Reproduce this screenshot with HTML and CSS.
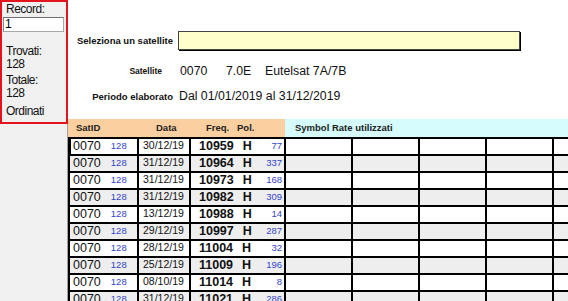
FILE: index.html
```html
<!DOCTYPE html>
<html lang="it">
<head>
<meta charset="utf-8">
<title>Satellite</title>
<link rel="stylesheet" href="styles.css">
</head>
<body>
<div class="app">
  <aside class="side">
    <div class="nav">
      <div class="lbl l-rec">Record:</div>
      <div class="recbox">1</div>
      <div class="lbl l-trov">Trovati:</div>
      <div class="lbl l-n1">128</div>
      <div class="lbl l-tot">Totale:</div>
      <div class="lbl l-n2">128</div>
      <div class="lbl l-ord">Ordinati</div>
    </div>
  </aside>
  <main class="main">
    <div class="form">
      <div class="frow r1">
        <span class="flabel">Seleziona un satellite</span>
        <div class="combo"></div>
      </div>
      <div class="frow r2">
        <span class="flabel small">Satellite</span>
        <span class="val v1">0070</span>
        <span class="val v2">7.0E</span>
        <span class="val">Eutelsat 7A/7B</span>
      </div>
      <div class="frow r3">
        <span class="flabel">Periodo elaborato</span>
        <span class="val v0">Dal 01/01/2019 al 31/12/2019</span>
      </div>
    </div>
    <div class="grid">
      <div class="thead">
        <div class="th-o">
          <span class="h-sat">SatID</span>
          <span class="h-data">Data</span>
          <span class="h-freq">Freq.</span>
          <span class="h-pol">Pol.</span>
        </div>
        <div class="th-c"><span class="h-sym">Symbol Rate utilizzati</span></div>
      </div>
      <div class="row sel">
        <div class="c c1"><span class="sid">0070</span><span class="blue n128">128</span></div>
        <div class="c c2">30/12/19</div>
        <div class="c c3"><span class="fq">10959</span><span class="pl">H</span><span class="blue cnt">77</span></div>
        <div class="c cs"></div><div class="c cs"></div><div class="c cs"></div><div class="c cs"></div><div class="c cs"></div>
      </div>
      <div class="row">
        <div class="c c1"><span class="sid">0070</span><span class="blue n128">128</span></div>
        <div class="c c2">31/12/19</div>
        <div class="c c3"><span class="fq">10964</span><span class="pl">H</span><span class="blue cnt">337</span></div>
        <div class="c cs"></div><div class="c cs"></div><div class="c cs"></div><div class="c cs"></div><div class="c cs"></div>
      </div>
      <div class="row">
        <div class="c c1"><span class="sid">0070</span><span class="blue n128">128</span></div>
        <div class="c c2">31/12/19</div>
        <div class="c c3"><span class="fq">10973</span><span class="pl">H</span><span class="blue cnt">168</span></div>
        <div class="c cs"></div><div class="c cs"></div><div class="c cs"></div><div class="c cs"></div><div class="c cs"></div>
      </div>
      <div class="row">
        <div class="c c1"><span class="sid">0070</span><span class="blue n128">128</span></div>
        <div class="c c2">31/12/19</div>
        <div class="c c3"><span class="fq">10982</span><span class="pl">H</span><span class="blue cnt">309</span></div>
        <div class="c cs"></div><div class="c cs"></div><div class="c cs"></div><div class="c cs"></div><div class="c cs"></div>
      </div>
      <div class="row">
        <div class="c c1"><span class="sid">0070</span><span class="blue n128">128</span></div>
        <div class="c c2">13/12/19</div>
        <div class="c c3"><span class="fq">10988</span><span class="pl">H</span><span class="blue cnt">14</span></div>
        <div class="c cs"></div><div class="c cs"></div><div class="c cs"></div><div class="c cs"></div><div class="c cs"></div>
      </div>
      <div class="row">
        <div class="c c1"><span class="sid">0070</span><span class="blue n128">128</span></div>
        <div class="c c2">29/12/19</div>
        <div class="c c3"><span class="fq">10997</span><span class="pl">H</span><span class="blue cnt">287</span></div>
        <div class="c cs"></div><div class="c cs"></div><div class="c cs"></div><div class="c cs"></div><div class="c cs"></div>
      </div>
      <div class="row">
        <div class="c c1"><span class="sid">0070</span><span class="blue n128">128</span></div>
        <div class="c c2">28/12/19</div>
        <div class="c c3"><span class="fq">11004</span><span class="pl">H</span><span class="blue cnt">32</span></div>
        <div class="c cs"></div><div class="c cs"></div><div class="c cs"></div><div class="c cs"></div><div class="c cs"></div>
      </div>
      <div class="row">
        <div class="c c1"><span class="sid">0070</span><span class="blue n128">128</span></div>
        <div class="c c2">25/12/19</div>
        <div class="c c3"><span class="fq">11009</span><span class="pl">H</span><span class="blue cnt">196</span></div>
        <div class="c cs"></div><div class="c cs"></div><div class="c cs"></div><div class="c cs"></div><div class="c cs"></div>
      </div>
      <div class="row">
        <div class="c c1"><span class="sid">0070</span><span class="blue n128">128</span></div>
        <div class="c c2">08/10/19</div>
        <div class="c c3"><span class="fq">11014</span><span class="pl">H</span><span class="blue cnt">8</span></div>
        <div class="c cs"></div><div class="c cs"></div><div class="c cs"></div><div class="c cs"></div><div class="c cs"></div>
      </div>
      <div class="row">
        <div class="c c1"><span class="sid">0070</span><span class="blue n128">128</span></div>
        <div class="c c2">31/12/19</div>
        <div class="c c3"><span class="fq">11021</span><span class="pl">H</span><span class="blue cnt">286</span></div>
        <div class="c cs"></div><div class="c cs"></div><div class="c cs"></div><div class="c cs"></div><div class="c cs"></div>
      </div>
    </div>
  </main>
</div>
</body>
</html>
```
FILE: styles.css
```css
* { box-sizing: border-box; margin: 0; padding: 0; }
html, body { width: 568px; height: 301px; overflow: hidden; background: #fff; }
body { font-family: "Liberation Sans", Arial, sans-serif; color: #000; }

.app { display: flex; height: 301px; }

/* left navigation column */
.side {
  width: 68px; flex: none; height: 301px;
  background: #f0f0f0; border-right: 1px solid #a0a0a0;
}
.nav {
  width: 68px; height: 124px;
  border: 2px solid #e3141d;
  padding: 1px 0 0 4px;
}
.lbl { font-size: 12px; line-height: 13px; letter-spacing: -0.5px; color: #111; }
.recbox {
  margin: 1px 0 0 -3px; width: 61px; height: 15px;
  background: #fff;
  border: 1px solid #a8a8a8; border-top-color: #707070; border-left-color: #8a8a8a;
  font-size: 12px; line-height: 13px; padding-left: 1px;
}
.l-trov { margin-top: 13px; }
.l-n1 { margin-top: 0; }
.l-tot { margin-top: 3px; }
.l-n2 { margin-top: 0; }
.l-ord { margin-top: 5px; }

/* main */
.main { flex: 1; overflow: hidden; }
.form { height: 119px; padding-top: 30px; }
.frow { display: flex; align-items: center; }
.r1 { height: 20px; }
.r2 { height: 16px; margin-top: 13px; }
.r3 { height: 16px; margin-top: 9px; }
.flabel {
  width: 110px; flex: none; text-align: right; padding-right: 5px;
  font-weight: bold; font-size: 9.5px; color: #111;
}
.flabel.small { font-size: 8.5px; padding-right: 16px; }
.combo {
  width: 342px; height: 19px;
  background: #ffffcc;
  border: 1px solid #444;
  box-shadow: 1px 1px 0 #000;
}
.val { font-size: 12.3px; color: #111; }
.v0 { margin-left: 1px; }
.v1 { width: 46px; margin-left: 2px; }
.v2 { width: 39px; }

/* grid */
.grid { width: 560px; }
.thead { display: flex; height: 18px; font-weight: bold; font-size: 9.5px; line-height: 18px; color: #222; }
.th-o { width: 217px; flex: none; background: #fbcf9f; display: flex; }
.th-c { flex: 1; background: #d5fbfc; padding-left: 10px; }
.h-sat { width: 88px; padding-left: 8px; }
.h-data { width: 50px; }
.h-freq { width: 31px; }

.row {
  display: flex; height: 17px;
  border-top: 2px solid #000; border-left: 2px solid #000;
  background: #fff;
}
.row:nth-child(odd) { background: #eeeeee; }
.row.sel { border-left-width: 3px; }
.c { height: 15px; border-right: 2px solid #000; flex: none; }
.c1 { width: 69px; padding-left: 3px; display: flex; align-items: flex-start; }
.sel .c1 { width: 68px; padding-left: 2px; }
.c2 { width: 52px; padding-left: 4px; font-size: 10.5px; line-height: 13px; color: #111; }
.c3 { width: 95px; padding-left: 8px; display: flex; align-items: flex-start; }
.cs { width: 67px; }

.sid { font-size: 12.5px; line-height: 15px; color: #111; }
.blue { color: #3344cc; font-size: 9.5px; line-height: 11px; padding-top: 1px; }
.n128 { margin-left: 10px; }
.fq { font-size: 12.5px; font-weight: bold; line-height: 15px; color: #111; }
.pl { font-size: 12.5px; font-weight: bold; line-height: 15px; margin-left: 9px; color: #111; }
.cnt { margin-left: auto; padding-right: 2px; }
```
